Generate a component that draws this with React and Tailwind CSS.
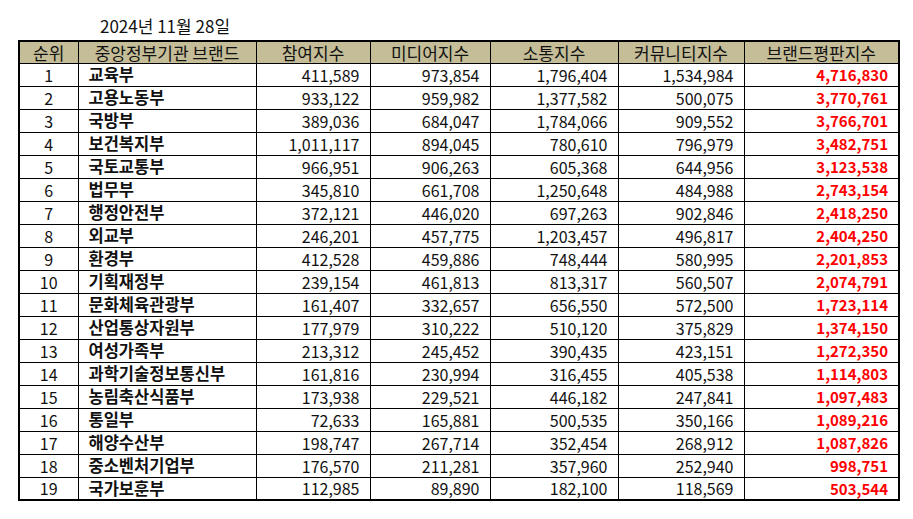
const rows = [
  ["1", "교육부", "411,589", "973,854", "1,796,404", "1,534,984", "4,716,830"],
  ["2", "고용노동부", "933,122", "959,982", "1,377,582", "500,075", "3,770,761"],
  ["3", "국방부", "389,036", "684,047", "1,784,066", "909,552", "3,766,701"],
  ["4", "보건복지부", "1,011,117", "894,045", "780,610", "796,979", "3,482,751"],
  ["5", "국토교통부", "966,951", "906,263", "605,368", "644,956", "3,123,538"],
  ["6", "법무부", "345,810", "661,708", "1,250,648", "484,988", "2,743,154"],
  ["7", "행정안전부", "372,121", "446,020", "697,263", "902,846", "2,418,250"],
  ["8", "외교부", "246,201", "457,775", "1,203,457", "496,817", "2,404,250"],
  ["9", "환경부", "412,528", "459,886", "748,444", "580,995", "2,201,853"],
  ["10", "기획재정부", "239,154", "461,813", "813,317", "560,507", "2,074,791"],
  ["11", "문화체육관광부", "161,407", "332,657", "656,550", "572,500", "1,723,114"],
  ["12", "산업통상자원부", "177,979", "310,222", "510,120", "375,829", "1,374,150"],
  ["13", "여성가족부", "213,312", "245,452", "390,435", "423,151", "1,272,350"],
  ["14", "과학기술정보통신부", "161,816", "230,994", "316,455", "405,538", "1,114,803"],
  ["15", "농림축산식품부", "173,938", "229,521", "446,182", "247,841", "1,097,483"],
  ["16", "통일부", "72,633", "165,881", "500,535", "350,166", "1,089,216"],
  ["17", "해양수산부", "198,747", "267,714", "352,454", "268,912", "1,087,826"],
  ["18", "중소벤처기업부", "176,570", "211,281", "357,960", "252,940", "998,751"],
  ["19", "국가보훈부", "112,985", "89,890", "182,100", "118,569", "503,544"],
];

const headers = ["순위", "중앙정부기관 브랜드", "참여지수", "미디어지수", "소통지수", "커뮤니티지수", "브랜드평판지수"];
const widths = ["w-[59px]", "w-[178px]", "w-[114px]", "w-[120px]", "w-[128px]", "w-[126px]", "w-[155px]"];

export default function App() {
  return (
    <div
      className="min-h-screen bg-white text-[#111] pl-[18px] pt-[16px]"
      style={{ fontFamily: '"Noto Sans CJK KR", "Noto Sans", sans-serif' }}
    >
      <div className="ml-[82px] h-[24px] text-[17px] leading-[20px]">2024년 11월 28일</div>

      <table className="border-collapse border-2 border-black table-fixed w-[880px] text-[16px] leading-none">
        <colgroup>
          {widths.map((w, i) => (
            <col key={i} className={w} />
          ))}
        </colgroup>
        <thead>
          <tr className="h-[22px] bg-[#c4bd97]">
            {headers.map((h) => (
              <th key={h} className="border border-black font-normal text-center text-[17px] p-0">
                {h}
              </th>
            ))}
          </tr>
        </thead>
        <tbody>
          {rows.map((r) => (
            <tr key={r[0]} className="h-[23px]">
              <td className="border border-black text-center p-0">{r[0]}</td>
              <td className="border border-black font-bold text-[16.5px] pl-[10px] py-0">{r[1]}</td>
              <td className="border border-black text-right pr-[10px] py-0">{r[2]}</td>
              <td className="border border-black text-right pr-[10px] py-0">{r[3]}</td>
              <td className="border border-black text-right pr-[10px] py-0">{r[4]}</td>
              <td className="border border-black text-right pr-[10px] py-0">{r[5]}</td>
              <td className="border border-black text-right pr-[10px] py-0 font-bold text-[15px] text-[#ff0000]">{r[6]}</td>
            </tr>
          ))}
        </tbody>
      </table>
    </div>
  );
}
